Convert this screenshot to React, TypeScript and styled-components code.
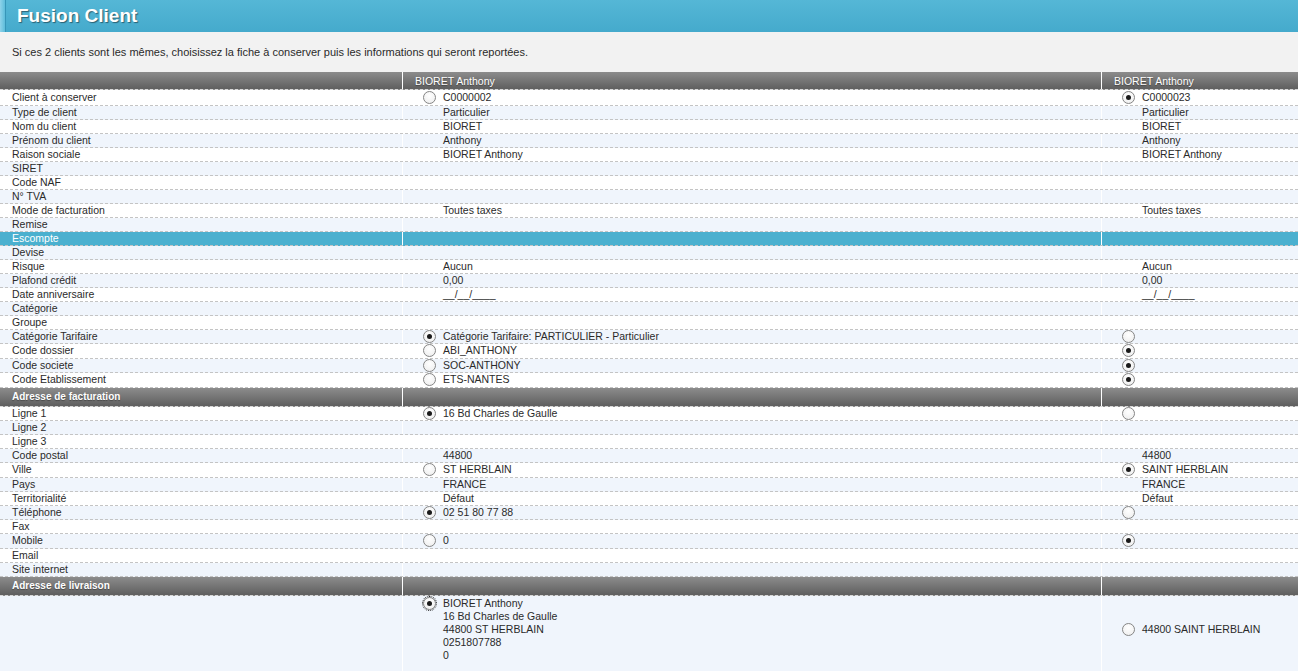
import React from "react";
import styled, { createGlobalStyle, css } from "styled-components";

type Cell = { text?: string; radio?: "on" | "off" };
type Line = { label: string; a?: Cell; b?: Cell; selected?: boolean };

const clientLines: Line[] = [
  { label: "Client à conserver", a: { text: "C0000002", radio: "off" }, b: { text: "C0000023", radio: "on" } },
  { label: "Type de client", a: { text: "Particulier" }, b: { text: "Particulier" } },
  { label: "Nom du client", a: { text: "BIORET" }, b: { text: "BIORET" } },
  { label: "Prénom du client", a: { text: "Anthony" }, b: { text: "Anthony" } },
  { label: "Raison sociale", a: { text: "BIORET Anthony" }, b: { text: "BIORET Anthony" } },
  { label: "SIRET" },
  { label: "Code NAF" },
  { label: "N° TVA" },
  { label: "Mode de facturation", a: { text: "Toutes taxes" }, b: { text: "Toutes taxes" } },
  { label: "Remise" },
  { label: "Escompte", selected: true },
  { label: "Devise" },
  { label: "Risque", a: { text: "Aucun" }, b: { text: "Aucun" } },
  { label: "Plafond crédit", a: { text: "0,00" }, b: { text: "0,00" } },
  { label: "Date anniversaire", a: { text: "__/__/____" }, b: { text: "__/__/____" } },
  { label: "Catégorie" },
  { label: "Groupe" },
  {
    label: "Catégorie Tarifaire",
    a: { text: "Catégorie Tarifaire: PARTICULIER - Particulier", radio: "on" },
    b: { radio: "off" },
  },
  { label: "Code dossier", a: { text: "ABI_ANTHONY", radio: "off" }, b: { radio: "on" } },
  { label: "Code societe", a: { text: "SOC-ANTHONY", radio: "off" }, b: { radio: "on" } },
  { label: "Code Etablissement", a: { text: "ETS-NANTES", radio: "off" }, b: { radio: "on" } },
];

const billingLines: Line[] = [
  { label: "Ligne 1", a: { text: "16 Bd Charles de Gaulle", radio: "on" }, b: { radio: "off" } },
  { label: "Ligne 2" },
  { label: "Ligne 3" },
  { label: "Code postal", a: { text: "44800" }, b: { text: "44800" } },
  { label: "Ville", a: { text: "ST HERBLAIN", radio: "off" }, b: { text: "SAINT HERBLAIN", radio: "on" } },
  { label: "Pays", a: { text: "FRANCE" }, b: { text: "FRANCE" } },
  { label: "Territorialité", a: { text: "Défaut" }, b: { text: "Défaut" } },
  { label: "Téléphone", a: { text: "02 51 80 77 88", radio: "on" }, b: { radio: "off" } },
  { label: "Fax" },
  { label: "Mobile", a: { text: "0", radio: "off" }, b: { radio: "on" } },
  { label: "Email" },
  { label: "Site internet" },
];

const deliveryA = ["BIORET Anthony", "16 Bd Charles de Gaulle", "44800 ST HERBLAIN", "0251807788", "0"];

const GlobalStyle = createGlobalStyle`
  html, body {
    margin: 0;
    padding: 0;
    overflow: hidden;
    background: #fff;
  }
  body {
    font-family: "Liberation Sans", Arial, sans-serif;
    font-size: 11px;
    color: #2a2a2a;
  }
`;

const TitleBar = styled.div`
  position: relative;
  height: 32px;
  background: linear-gradient(#55b7d6, #45aacc);
  padding-left: 17px;
  display: flex;
  align-items: center;
  &::before {
    content: "";
    position: absolute;
    left: 0;
    top: 0;
    bottom: 0;
    width: 5px;
    background: linear-gradient(90deg, #8fd3ea, #5dbddb);
    border-right: 1px solid #3796b8;
  }
`;

const Title = styled.h1`
  margin: 0;
  font-size: 19px;
  font-weight: bold;
  color: #fff;
  text-shadow: 1px 1px 1px rgba(0, 0, 0, 0.45);
`;

const Intro = styled.div`
  height: 40px;
  background: #f2f2f2;
  padding-left: 12px;
  display: flex;
  align-items: center;
  box-sizing: border-box;
`;

const Table = styled.div`
  font-size: 10.5px;
`;

const Grid = styled.div`
  display: grid;
  grid-template-columns: 403px 699px 1fr;
`;

const HeadRow = styled(Grid)<{ $section?: boolean }>`
  height: ${(p) => (p.$section ? 18 : 17)}px;
  background: linear-gradient(#8c8c8c, #5f5f5f);
  border-bottom: 1px dashed #d8d8d8;
  color: #fff;
  text-shadow: 0 1px 1px rgba(0, 0, 0, 0.35);
`;

const HeadCell = styled.div<{ $bold?: boolean }>`
  display: flex;
  align-items: center;
  padding-left: 12px;
  font-weight: ${(p) => (p.$bold ? "bold" : "normal")};
  font-size: ${(p) => (p.$bold ? "10px" : "inherit")};
  &:not(:last-child) {
    border-right: 1px solid #fff;
  }
`;

const DataRow = styled(Grid)<{ $alt?: boolean; $selected?: boolean; $radio?: boolean; $first?: boolean }>`
  min-height: ${(p) => (p.$radio ? 13.5 : 13)}px;
  padding-top: ${(p) => (p.$first ? 1 : 0)}px;
  border-bottom: 1px dashed #c4c4c4;
  background: ${(p) => (p.$alt ? "#f0f5fc" : "#fff")};
  ${(p) =>
    p.$selected &&
    css`
      background: #4bb0cf;
      color: #fff;
    `}
`;

const LabelCell = styled.div`
  display: flex;
  align-items: center;
  padding-left: 12px;
  line-height: 13px;
  border-right: 1px solid #fff;
`;

const ValueCell = styled.div<{ $last?: boolean }>`
  display: flex;
  align-items: center;
  padding-left: 20px;
  line-height: 13px;
  border-right: ${(p) => (p.$last ? "none" : "1px solid #fff")};
`;

const RadioSlot = styled.span`
  width: 13px;
  height: 13px;
  flex: none;
  margin-right: 7px;
  display: flex;
  align-items: center;
`;

const Radio = styled.span<{ $on?: boolean; $focus?: boolean }>`
  box-sizing: border-box;
  width: 13px;
  height: 13px;
  border-radius: 50%;
  border: 1px solid #858585;
  background: radial-gradient(circle at 50% 35%, #fff, #ececec);
  display: flex;
  align-items: center;
  justify-content: center;
  ${(p) =>
    p.$focus &&
    css`
      outline: 1px dotted #222;
      outline-offset: 0px;
    `}
  &::after {
    content: "";
    width: 5px;
    height: 5px;
    border-radius: 50%;
    background: #1a1a1a;
    display: ${(p) => (p.$on ? "block" : "none")};
  }
`;

const DeliveryRow = styled(Grid)`
  background: #f0f5fc;
  min-height: 76px;
`;

const DeliveryCell = styled.div<{ $middle?: boolean; $last?: boolean }>`
  display: flex;
  align-items: ${(p) => (p.$middle ? "center" : "flex-start")};
  padding: 1px 0 10px 20px;
  line-height: 13px;
  border-right: ${(p) => (p.$last ? "none" : "1px solid #fff")};
`;

const AddressLines = styled.div`
  display: flex;
  flex-direction: column;
`;

const Value = ({ cell, last }: { cell?: Cell; last?: boolean }) => (
  <ValueCell $last={last}>
    <RadioSlot>{cell?.radio && <Radio $on={cell.radio === "on"} />}</RadioSlot>
    {cell?.text}
  </ValueCell>
);

const Lines = ({ lines, padFirst }: { lines: Line[]; padFirst?: boolean }) => (
  <>
    {lines.map((l, i) => (
      <DataRow
        key={l.label}
        $alt={i % 2 === 1}
        $selected={l.selected}
        $radio={!!(l.a?.radio || l.b?.radio)}
        $first={padFirst && i === 0}
      >
        <LabelCell>{l.label}</LabelCell>
        <Value cell={l.a} />
        <Value cell={l.b} last />
      </DataRow>
    ))}
  </>
);

const App = () => {
  return (
    <>
      <GlobalStyle />
      <TitleBar>
        <Title>Fusion Client</Title>
      </TitleBar>
      <Intro>
        Si ces 2 clients sont les mêmes, choisissez la fiche à conserver puis les informations qui seront reportées.
      </Intro>

      <Table>
        <HeadRow>
          <HeadCell />
          <HeadCell>BIORET Anthony</HeadCell>
          <HeadCell>BIORET Anthony</HeadCell>
        </HeadRow>
        <Lines lines={clientLines} padFirst />

        <HeadRow $section>
          <HeadCell $bold>Adresse de facturation</HeadCell>
          <HeadCell />
          <HeadCell />
        </HeadRow>
        <Lines lines={billingLines} />

        <HeadRow $section>
          <HeadCell $bold>Adresse de livraison</HeadCell>
          <HeadCell />
          <HeadCell />
        </HeadRow>
        <DeliveryRow>
          <DeliveryCell />
          <DeliveryCell>
            <RadioSlot>
              <Radio $on $focus />
            </RadioSlot>
            <AddressLines>
              {deliveryA.map((t) => (
                <span key={t}>{t}</span>
              ))}
            </AddressLines>
          </DeliveryCell>
          <DeliveryCell $middle $last>
            <RadioSlot>
              <Radio />
            </RadioSlot>
            44800 SAINT HERBLAIN
          </DeliveryCell>
        </DeliveryRow>
      </Table>
    </>
  );
};

export default App;
